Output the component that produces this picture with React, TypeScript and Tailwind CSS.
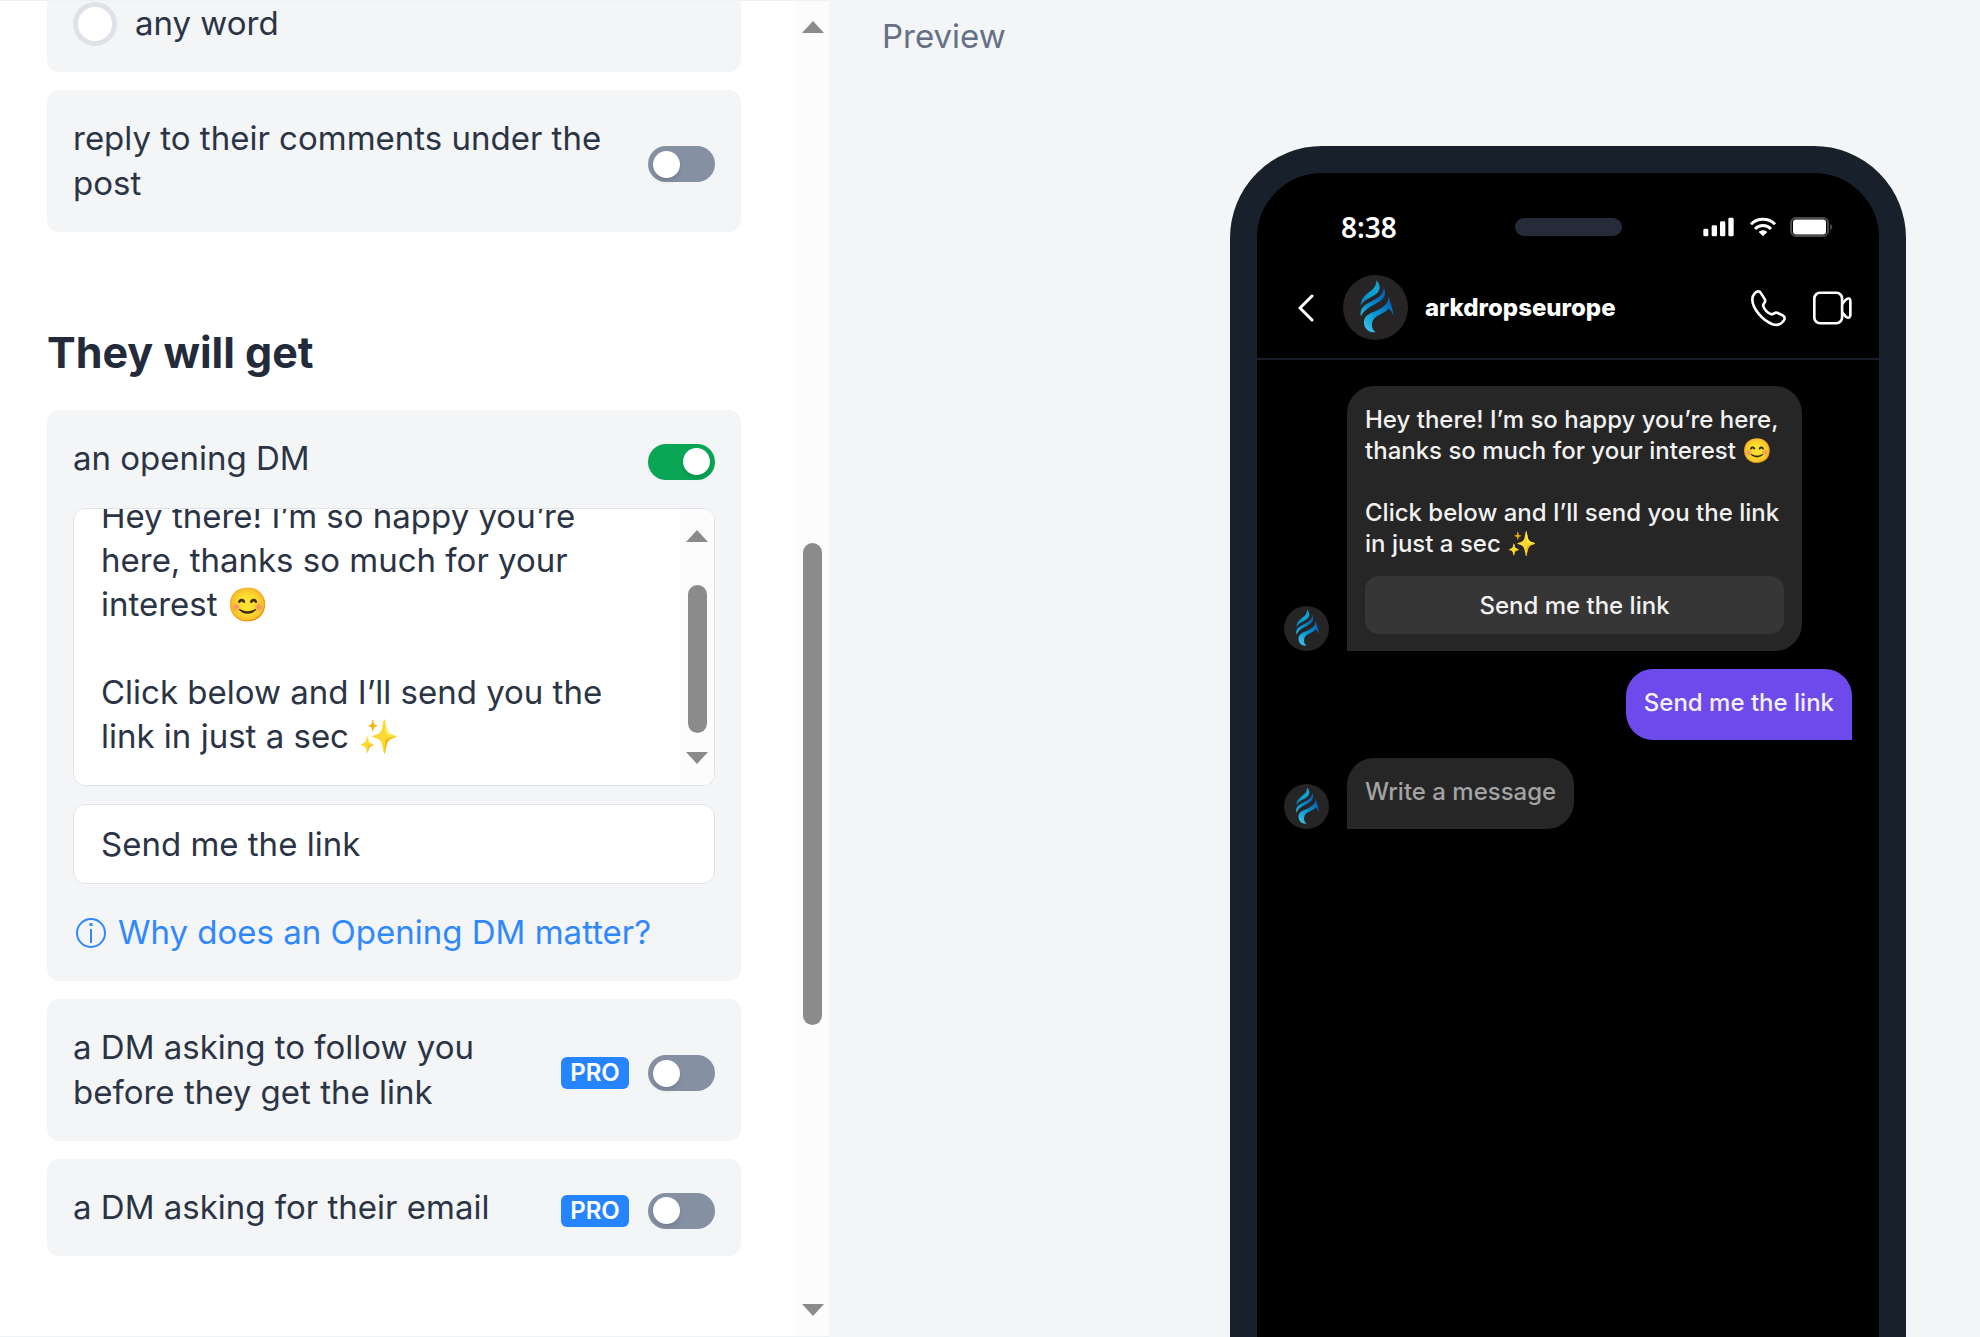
import React, { useEffect, useId, useRef, useState } from "react";

const OPENING_DM =
  "Hey there! I’m so happy you’re here, thanks so much for your interest 😊\n\nClick below and I’ll send you the link in just a sec ✨";

function Arrow({ down = false }: { down?: boolean }) {
  return (
    <svg width="22" height="12" viewBox="0 0 22 12" className="shrink-0 fill-[#8b8b8b]" aria-hidden="true">
      {down ? <path d="M0 0h22L11 12z" /> : <path d="M11 0l11 12H0z" />}
    </svg>
  );
}

function Toggle({ id, on = false }: { id: string; on?: boolean }) {
  return (
    <input
      id={id}
      type="checkbox"
      role="switch"
      defaultChecked={on}
      className="flex h-9 w-[67px] shrink-0 cursor-pointer appearance-none items-center rounded-full bg-[#8591a3] px-[5px] before:block before:size-[27px] before:rounded-full before:bg-white before:shadow-md before:content-[''] checked:bg-[#0aa555] checked:before:ml-[30px]"
    />
  );
}

function OptionRow({ label, on, pro }: { label: string; on?: boolean; pro?: boolean }) {
  const id = useId();
  return (
    <div className="flex items-center justify-between gap-[18px]">
      <label htmlFor={id} className="min-w-0">
        {label}
      </label>
      <div className="flex shrink-0 items-center gap-[19px] pt-1.5">
        {pro && (
          <span className="flex h-8 w-[68px] items-center justify-center rounded-md bg-[#2684ff] text-2xl font-semibold text-white">
            PRO
          </span>
        )}
        <Toggle id={id} on={on} />
      </div>
    </div>
  );
}

function Card({ children }: { children: React.ReactNode }) {
  return <div className="rounded-xl bg-[#f3f5f7] p-[26px]">{children}</div>;
}

function DmEditor() {
  const ref = useRef<HTMLTextAreaElement>(null);
  const [text, setText] = useState(OPENING_DM);
  useEffect(() => {
    if (ref.current) ref.current.scrollTop = ref.current.scrollHeight;
  }, []);
  return (
    <div className="mt-[27px] flex h-[278px] overflow-hidden rounded-xl border border-[#dfe3e8] bg-white">
      <textarea
        ref={ref}
        aria-label="Opening DM message"
        value={text}
        onChange={(e) => setText(e.target.value)}
        className="min-w-0 flex-1 resize-none overflow-hidden px-[27px] py-[27px] leading-[44px] outline-none"
      />
      <div className="flex w-[34px] shrink-0 flex-col items-center bg-[#fcfcfc] py-[21px]">
        <Arrow />
        <div className="grow-[43]" />
        <div className="w-[19px] grow-[148] rounded-full bg-[#8b8b8b]" />
        <div className="grow-[19]" />
        <Arrow down />
      </div>
    </div>
  );
}

function Logo({ small = false }: { small?: boolean }) {
  const g = useId();
  return (
    <svg viewBox="0 0 196 196" className={small ? "size-[45px] shrink-0" : "size-[65px] shrink-0"} aria-hidden="true">
      <defs>
        <linearGradient id={g} gradientUnits="userSpaceOnUse" x1="66" y1="160" x2="148" y2="80">
          <stop offset="0" stopColor="#3cbfe2" />
          <stop offset="0.45" stopColor="#0697d4" />
          <stop offset="1" stopColor="#0660b4" />
        </linearGradient>
        <linearGradient id={g + "t"} gradientUnits="userSpaceOnUse" x1="54" y1="90" x2="112" y2="20">
          <stop offset="0" stopColor="#0a7fae" />
          <stop offset="0.5" stopColor="#08a0d6" />
          <stop offset="1" stopColor="#1aa0c6" />
        </linearGradient>
      </defs>
      <circle cx="98" cy="98" r="98" fill="#262425" />
      <path fill={`url(#${g}t)`} d="M101 15C110 27 114 37 108 48C99 65 68 68 53 92C54 73 66 62 77 53C92 42 101 32 101 15Z" />
      <path fill={`url(#${g})`} d="M123 38C129 52 129 64 117 75C100 90 68 96 54 125C50 104 60 94 74 86C96 74 122 66 123 38Z" />
      <path
        fill={`url(#${g})`}
        d="M138 62C141 82 150 98 152 123C148 112 145 107 138 101C126 116 104 120 94 131C83 145 86 166 99 172C80 176 62 162 63 140C65 118 88 114 108 104C128 94 138 82 138 62Z"
      />
    </svg>
  );
}

function StatusIcons() {
  return (
    <div className="flex items-center justify-end pr-[46px]" aria-hidden="true">
      <svg width="31" height="20" viewBox="0 0 93 60" fill="#fff">
        <rect x="1" y="35" width="15" height="23" rx="4" />
        <rect x="26" y="25" width="16" height="33" rx="4" />
        <rect x="51" y="13" width="16" height="45" rx="4" />
        <rect x="76" y="2" width="16" height="56" rx="4" />
      </svg>
      <svg width="26" height="20" viewBox="0 0 78 60" fill="none" stroke="#fff" strokeWidth="9" className="ml-4">
        <path d="M3 22C22 2 56 2 75 22" />
        <path d="M15 36C28 22 50 22 63 36" />
        <path d="M26 45C34 38 44 38 52 45L39 58Z" fill="#fff" stroke="none" />
      </svg>
      <svg width="43" height="20" viewBox="0 0 43 20" className="ml-3.5">
        <rect x="1" y="1" width="37" height="18" rx="5" fill="none" stroke="#4a4a4a" strokeWidth="2" />
        <rect x="3" y="2.5" width="33" height="15" rx="3" fill="#fff" />
        <path d="M40 7c3 1 3 5 0 6z" fill="#4a4a4a" />
      </svg>
    </div>
  );
}

function PhonePreview() {
  return (
    <div className="flex min-h-[1400px] w-full max-w-[676px] shrink-0 flex-col overflow-hidden rounded-[92px] border-[27px] border-[#18202b] bg-black text-2xl leading-[31px] font-medium text-[#f2f2f2]">
      <div className="mt-[35px] grid h-[38px] grid-cols-[1fr_auto_1fr] items-center">
        <span className="pl-[84px] font-['Noto_Sans',sans-serif] text-[28px] font-semibold text-white">8:38</span>
        <div className="h-[18px] w-[107px] rounded-full bg-[#252b39]" />
        <StatusIcons />
      </div>

      <header className="mt-[29px] flex items-center border-b-2 border-[#171d29] pr-[27px] pb-[18px] pl-10">
        <button type="button" aria-label="Back" className="mr-[29px]">
          <svg width="17" height="28" viewBox="0 0 17 28" fill="none" stroke="#fff" strokeWidth="3" strokeLinecap="round" strokeLinejoin="round">
            <path d="M15 2L3 14l12 12" />
          </svg>
        </button>
        <Logo />
        <span className="ml-[17px] flex-1 font-extrabold text-white">arkdropseurope</span>
        <button type="button" aria-label="Call" className="mr-[26px]">
          <svg width="37" height="38" viewBox="0 0 112 114" fill="none" stroke="#fff" strokeWidth="8" strokeLinejoin="round">
            <path d="M14 13C20 5 29 5 33 12L45 31C50 40 38 43 40 51C43 62 54 73 64 76C71 77 75 68 84 72L100 80C107 84 106 92 100 98C92 108 80 110 68 106C36 94 8 58 7 32C7 24 9 18 14 13Z" />
          </svg>
        </button>
        <button type="button" aria-label="Video call">
          <svg width="39" height="34" viewBox="0 0 118 102" fill="none" stroke="#fff" strokeWidth="8" strokeLinejoin="round">
            <rect x="4" y="5" width="84" height="92" rx="17" />
            <path d="M88 39L99 26Q113 17 113 30V72Q113 85 99 77L88 64" />
          </svg>
        </button>
      </header>

      <div className="flex flex-col gap-[18px] px-[27px] pt-[26px]">
        <div className="flex items-end gap-[18px]">
          <Logo small />
          <div className="max-w-[455px] rounded-[27px] rounded-bl-none bg-[#262626] px-[18px] pt-[18px] pb-[17px]">
            <p className="whitespace-pre-line">{OPENING_DM}</p>
            <button type="button" className="mt-[17px] h-[58px] w-full rounded-[14px] bg-[#363636]">
              Send me the link
            </button>
          </div>
        </div>
        <div className="self-end rounded-[27px] rounded-br-none bg-[#6e49eb] px-[18px] pt-[18px] pb-[22px]">
          Send me the link
        </div>
        <div className="flex items-end gap-[18px]">
          <Logo small />
          <div className="rounded-[27px] rounded-bl-none bg-[#262626] px-[18px] pt-[18px] pb-[22px] text-[#a3a3a3]">
            Write a message
          </div>
        </div>
      </div>
    </div>
  );
}

export default function App() {
  return (
    <div className="grid h-screen grid-cols-[829fr_1151fr] overflow-hidden bg-[#f3f5f7] font-['Inter',sans-serif] text-[33px] leading-[45px] text-[#2b3445]">
      <section className="flex min-h-0 min-w-0 border-y border-[#f0f1f3] bg-white">
        <form className="flex min-w-0 flex-1 flex-col gap-[18px] overflow-hidden pr-[55px] pl-[47px]">
          <div className="rounded-b-xl bg-[#f3f5f7] px-[26px] pb-[26px]">
            <label className="flex items-center gap-[18px]">
              <input
                type="radio"
                name="trigger"
                className="size-11 shrink-0 appearance-none rounded-full border-[5px] border-[#dfe3e9] bg-white checked:border-[#2684ff]"
              />
              any word
            </label>
          </div>
          <Card>
            <OptionRow label="reply to their comments under the post" />
          </Card>

          <h2 className="mt-[76px] mb-[14px] text-[43px] leading-[52px] font-bold text-[#232b3b]">They will get</h2>

          <Card>
            <OptionRow label="an opening DM" on />
            <DmEditor />
            <input
              type="text"
              aria-label="Button label"
              defaultValue="Send me the link"
              className="mt-[18px] block h-20 w-full rounded-xl border border-[#dfe3e8] bg-white px-[27px] outline-none"
            />
            <a href="#why" className="mt-[26px] flex items-center gap-3 pl-[3px] text-[#2f88fe]">
              <svg width="30" height="30" viewBox="0 0 30 30" fill="none" stroke="currentColor" strokeWidth="2" className="shrink-0" aria-hidden="true">
                <circle cx="15" cy="15" r="14" />
                <path d="M15 11v14" />
                <path d="M15 5v3" strokeWidth="3" />
              </svg>
              Why does an Opening DM matter?
            </a>
          </Card>
          <Card>
            <OptionRow label="a DM asking to follow you before they get the link" pro />
          </Card>
          <Card>
            <OptionRow label="a DM asking for their email" pro />
          </Card>
        </form>

        <div className="flex w-[33px] shrink-0 flex-col items-center bg-[#fcfcfc] py-5">
          <Arrow />
          <div className="grow-[510]" />
          <div className="w-[19px] grow-[482] rounded-full bg-[#8b8b8b]" />
          <div className="grow-[279]" />
          <Arrow down />
        </div>
      </section>

      <section className="flex min-h-0 min-w-0 flex-col overflow-hidden pt-[14px] pr-[74px] pl-[53px]">
        <h3 className="mb-[87px] text-[#667085]">Preview</h3>
        <div className="flex justify-end">
          <PhonePreview />
        </div>
      </section>
    </div>
  );
}
